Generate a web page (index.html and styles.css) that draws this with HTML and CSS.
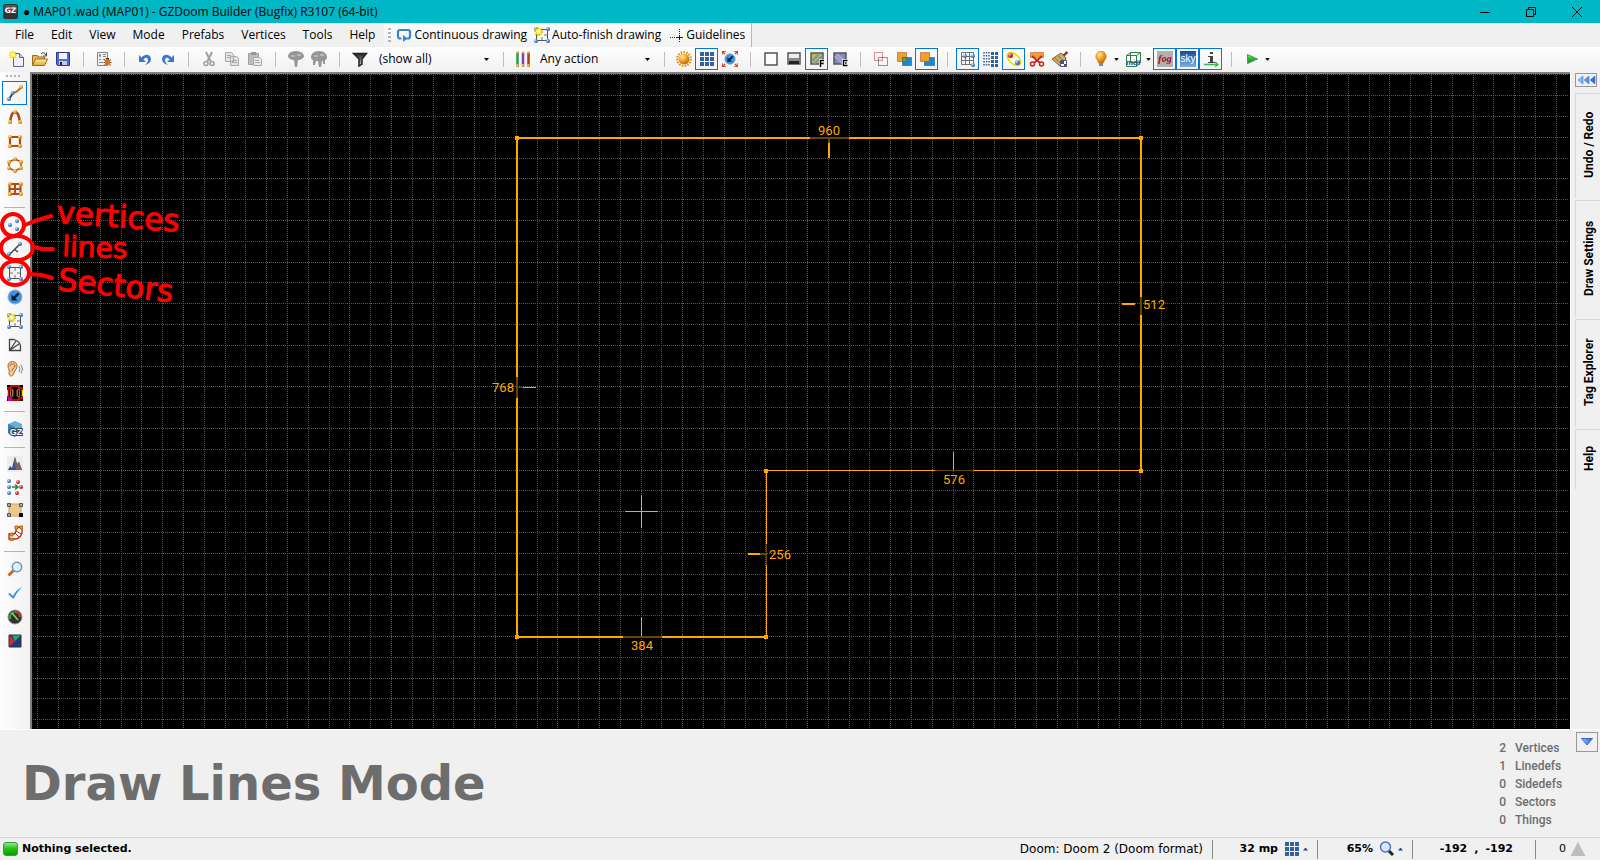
FILE: index.html
```html
<!DOCTYPE html>
<html lang="en">
<head>
<meta charset="utf-8">
<title>MAP01.wad (MAP01) - GZDoom Builder (Bugfix) R3107 (64-bit)</title>
<link rel="stylesheet" href="styles.css">
</head>
<body>
<svg class="defs" width="0" height="0" aria-hidden="true">
  <defs>
    <radialGradient id="gb" cx=".35" cy=".3" r=".8"><stop offset="0" stop-color="#d8ecff"/><stop offset=".45" stop-color="#4a90d8"/><stop offset="1" stop-color="#1c4c94"/></radialGradient>
    <radialGradient id="go" cx=".35" cy=".3" r=".8"><stop offset="0" stop-color="#ffe9a0"/><stop offset=".5" stop-color="#f0a020"/><stop offset="1" stop-color="#a86008"/></radialGradient>
    <radialGradient id="gr" cx=".35" cy=".3" r=".8"><stop offset="0" stop-color="#ffc0c0"/><stop offset=".5" stop-color="#dc3038"/><stop offset="1" stop-color="#901018"/></radialGradient>
    <linearGradient id="gfold" x2="0" y2="1"><stop offset="0" stop-color="#fff0a8"/><stop offset="1" stop-color="#e6a52c"/></linearGradient>
    <linearGradient id="ggreen" x2="0" y2="1"><stop offset="0" stop-color="#8fe08a"/><stop offset=".4" stop-color="#38b838"/><stop offset="1" stop-color="#0c8018"/></linearGradient>
    <linearGradient id="gsky" x2="0" y2="1"><stop offset="0" stop-color="#174a94"/><stop offset="1" stop-color="#7ab0e4"/></linearGradient>
    <linearGradient id="ggrey" x2="0" y2="1"><stop offset="0" stop-color="#222"/><stop offset="1" stop-color="#ccc"/></linearGradient>
    <linearGradient id="garrow" x2="1" y2="0"><stop offset="0" stop-color="#a4c4f4"/><stop offset="1" stop-color="#2860d0"/></linearGradient>
    <symbol id="b" viewBox="0 0 4 4"><circle cx="2" cy="2" r="2" fill="url(#gb)"/></symbol>
    <symbol id="o" viewBox="0 0 4 4"><circle cx="2" cy="2" r="2" fill="url(#go)"/></symbol>
    <symbol id="r" viewBox="0 0 4 4"><circle cx="2" cy="2" r="2" fill="url(#gr)"/></symbol>
    <symbol id="star" viewBox="0 0 8 8"><path d="M4 0v8M0 4h8M1 1l6 6M7 1L1 7" stroke="#f2d800" stroke-width="1.3"/><circle cx="4" cy="4" r="2" fill="#fffb80"/></symbol>
    <symbol id="sector" viewBox="0 0 16 16"><path d="M2.500 2.500h11v11h-11z" fill="#f4f4f4" stroke="#555"/><path d="M8 3v3M8 10v3M3 8h3M10 8h3" stroke="#777"/><use href="#b" x="0" y="0" width="4" height="4"/><use href="#b" x="12" y="0" width="4" height="4"/><use href="#b" x="0" y="12" width="4" height="4"/><use href="#b" x="12" y="12" width="4" height="4"/></symbol>
    <symbol id="makesector" viewBox="0 0 16 16"><use href="#sector" width="16" height="16"/><use href="#star" width="9" height="9"/></symbol>
    <symbol id="grid9" viewBox="0 0 16 16"><path d="M1 1h4v4H1zM6 1h4v4H6zM11 1h4v4h-4zM1 6h4v4H1zM6 6h4v4H6zM11 6h4v4h-4zM1 11h4v4H1zM6 11h4v4H6zM11 11h4v4h-4z" fill="#34609c"/></symbol>
    <symbol id="disc" viewBox="0 0 16 16"><circle cx="8" cy="8" r="7" fill="#3e92dc" stroke="#86b4dc"/><path d="M4.500 11.500v-6L6.500 7.500 11 3.500l1.500 1.500-4 4.500 2 2z" fill="#0c1c30"/></symbol>
    <symbol id="lens" viewBox="0 0 16 16"><path d="M7 9l-5.500 5.500" stroke="#c07020" stroke-width="3"/><circle cx="10" cy="6" r="4.700" fill="#d8efff" stroke="#7090b8" stroke-width="1.500"/><path d="M7.500 5a3 3 0 0 1 3-2" stroke="#fff" stroke-width="1.500" fill="none"/></symbol>
  </defs>
</svg>

<header class="titlebar">
  <svg class="logo" viewBox="0 0 16 16"><rect width="16" height="16" rx="3" fill="#333"/><rect x="1" y="1" width="14" height="7" rx="2" fill="#555"/><text x="8" y="10" text-anchor="middle" class="logo-text">GZ</text></svg>
  <h1 class="title">● MAP01.wad (MAP01) - GZDoom Builder (Bugfix) R3107 (64-bit)</h1>
  <div class="window-buttons">
    <button aria-label="Minimize"><svg viewBox="0 0 10 10"><path d="M0 5.500h10"/></svg></button>
    <button aria-label="Restore"><svg viewBox="0 0 10 10"><path d="M.5 2.500h7v7h-7zM2.500 2V.5h7v7H8"/></svg></button>
    <button aria-label="Close"><svg viewBox="0 0 10 10"><path d="M0 0l10 10M10 0L0 10"/></svg></button>
  </div>
</header>

<div class="menubar">
  <nav class="menus">
    <button>File</button><button>Edit</button><button>View</button><button>Mode</button><button>Prefabs</button><button>Vertices</button><button>Tools</button><button>Help</button>
  </nav>
  <div class="drawbar">
    <span class="grip"></span>
    <button><svg class="ico" viewBox="0 0 16 16"><path d="M5.500 11.500H4a2 2 0 0 1-2-2V5a2 2 0 0 1 2-2h8a2 2 0 0 1 2 2v4.500a2 2 0 0 1-2 2h-1.500" fill="none" stroke="#3a86c8" stroke-width="2.200"/><path d="M7 8v7l4.500-3.500z" fill="#3a86c8"/></svg>Continuous drawing</button>
    <button><svg class="ico"><use href="#makesector"/></svg>Auto-finish drawing</button>
    <button><svg class="ico" viewBox="0 0 16 16"><path d="M2 10.500h13M11.500 2v13" stroke="#222" stroke-dasharray="1 1"/><path d="M9 10.500h5M11.500 8v5" stroke="#222"/></svg>Guidelines</button>
  </div>
</div>

<div class="toolbar">
  <button aria-label="New map"><svg class="ico" viewBox="0 0 16 16"><path d="M4.500 2.500h6l4 4v9h-10z" fill="#eef3fb" stroke="#56657e"/><path d="M10.500 2.500v4h4" fill="#c8d4e8" stroke="#56657e"/><use href="#star" width="8" height="8"/></svg></button>
  <button aria-label="Open map"><svg class="ico" viewBox="0 0 16 16"><path d="M.5 14.500v-10h5l1 1.500h6v3" fill="#e8b648" stroke="#9a7020"/><path d="M.5 14.500l3-6.500h12l-3 6.500z" fill="url(#gfold)" stroke="#9a7020"/><path d="M9 3q3-3 5 1M14.500 1.500V5H11" fill="none" stroke="#444"/></svg></button>
  <button aria-label="Save map"><svg class="ico" viewBox="0 0 16 16"><path d="M1.500 1.500h13v13h-12l-1-1z" fill="#5468d0" stroke="#2c3890"/><path d="M4 2h8v6H4z" fill="#f4f6ff"/><path d="M4 10h8v4H4z" fill="#c4c8d8"/><path d="M5 11h2v3H5z" fill="#223"/></svg></button>
  <span class="sep"></span>
  <button aria-label="Script editor"><svg class="ico" viewBox="0 0 16 16"><path d="M1.500 1.500h10v13h-10z" fill="#f0f0f0" stroke="#888"/><path d="M3.500 3.500h1v2h-1zM7 3.500h3M7 5.500h3M3 8.500h2M7 8.500h2M3 11.500h4" fill="none" stroke="#888"/><ellipse cx="11.500" cy="11" rx="2.500" ry="3.500" fill="#d87020"/><path d="M8 8.500l1.500 1.200M7.500 11.500H9M8 14.500l1.500-1.200M15 8.500l-1.500 1.200M15.500 11.500H14M15 14.500l-1.500-1.200" stroke="#8a4410"/><path d="M10 7.500h3" stroke="#402010"/></svg></button>
  <span class="sep"></span>
  <button aria-label="Undo"><svg class="ico" viewBox="0 0 16 16"><path d="M2 4v7h7L6.500 8.500C8 6 11 6 11 9c0 2-1 3-3 5 4-1 6-3 6-6 0-5-6-6-9.500-1.500z" fill="#3a78d0"/></svg></button>
  <button aria-label="Redo"><svg class="ico flip" viewBox="0 0 16 16"><path d="M2 4v7h7L6.500 8.500C8 6 11 6 11 9c0 2-1 3-3 5 4-1 6-3 6-6 0-5-6-6-9.500-1.500z" fill="#3a78d0"/></svg></button>
  <span class="sep"></span>
  <button aria-label="Cut" disabled><svg class="ico" viewBox="0 0 16 16"><path d="M5 1l4.500 9M11 1l-4.500 9" stroke="#a0a0a0" stroke-width="2"/><circle cx="5" cy="12.500" r="2" fill="none" stroke="#a0a0a0" stroke-width="1.500"/><circle cx="11" cy="12.500" r="2" fill="none" stroke="#a0a0a0" stroke-width="1.500"/></svg></button>
  <button aria-label="Copy" disabled><svg class="ico" viewBox="0 0 16 16"><path d="M1.500 1.500h6l2 2v7h-8zM6.500 5.500h6l2 2v7h-8z" fill="#e4e4e4" stroke="#a8a8a8"/><path d="M3 4.500h4M3 6.500h3M8 9.500h5M8 11.500h5" stroke="#a8a8a8"/></svg></button>
  <button aria-label="Paste" disabled><svg class="ico" viewBox="0 0 16 16"><path d="M1.500 2.500h10v11h-10z" fill="#bcbcbc" stroke="#a0a0a0"/><path d="M4 1h5v3H4z" fill="#989898"/><path d="M6.500 6.500h6l2 2v6h-8z" fill="#e8e8e8" stroke="#a8a8a8"/><path d="M8 9.500h4M8 11.500h5" stroke="#a8a8a8"/></svg></button>
  <span class="sep"></span>
  <button aria-label="Insert prefab" disabled><svg class="ico" viewBox="0 0 16 16"><path d="M8 0c5 0 8 3 8 5s-3 4-6 4l-1 7H7L6 9C3 9 0 7 0 5s3-5 8-5z" fill="#969696"/><path d="M3 5h4M9 4h4" stroke="#b8b8b8" stroke-width="2"/></svg></button>
  <button aria-label="Insert previous prefab" disabled><svg class="ico" viewBox="0 0 16 16"><path d="M8 0c5 0 8 3 8 6s-2 3-2 3v4h-2v-3h-1l-1 6H8l-1-6H5l-1 4H2V9S0 9 0 6s3-6 8-6z" fill="#969696"/><path d="M3 5h4M9 4h4" stroke="#b8b8b8" stroke-width="2"/></svg></button>
  <span class="sep"></span>
  <button aria-label="Things filter"><svg class="ico" viewBox="0 0 16 16"><path d="M1.500 2.500h13L10 8v5l-3 2V8z" fill="url(#ggrey)" stroke="#222" stroke-width="1.500"/></svg></button>
  <select class="picker filter" aria-label="Things filter"><option>(show all)</option></select>
  <span class="sep narrow"></span>
  <button aria-label="Linedef colors"><svg class="ico" viewBox="0 0 16 16"><path d="M2.500 2v12" stroke="#20a048" stroke-width="2.500"/><path d="M8 2v12" stroke="#9038b8" stroke-width="2.500"/><path d="M13.500 2v12" stroke="#a84010" stroke-width="2.500"/><use href="#o" x="1" width="3" height="3"/><use href="#o" x="6.500" width="3" height="3"/><use href="#o" x="12" width="3" height="3"/><use href="#o" x="1" y="13" width="3" height="3"/><use href="#o" x="6.500" y="13" width="3" height="3"/><use href="#o" x="12" y="13" width="3" height="3"/></svg></button>
  <select class="picker" aria-label="Linedef action"><option>Any action</option></select>
  <span class="sep narrow"></span>
  <button aria-label="Full brightness"><svg class="ico" viewBox="0 0 16 16"><circle cx="8" cy="8" r="6.700" fill="none" stroke="#e09010" stroke-width="2.500" stroke-dasharray="1.500 1.300"/><circle cx="8" cy="8" r="5.300" fill="url(#go)"/></svg></button>
  <button class="on" aria-label="Grid"><svg class="ico"><use href="#grid9"/></svg></button>
  <button aria-label="Dynamic grid"><svg class="ico" viewBox="0 0 16 16"><use href="#disc" x="2" y="2" width="12" height="12"/><path d="M0 4V0h4M12 0h4v4M16 12v4h-4M4 16H0v-4M0 0l3 3M16 0l-3 3M16 16l-3-3M0 16l3-3" fill="none" stroke="#d43820" stroke-width="1.300"/></svg></button>
  <span class="sep"></span>
  <button aria-label="View wireframe"><svg class="ico" viewBox="0 0 16 16"><path d="M2 2h12v12H2z" fill="#fbfbfb" stroke="#555" stroke-width="1.500"/></svg></button>
  <button aria-label="View brightness"><svg class="ico" viewBox="0 0 16 16"><path d="M2 2h12v11H2z" fill="#eee" stroke="#555" stroke-width="1.500"/><path d="M3 7h10v3H3z" fill="#888"/><path d="M3 10h10v3H3z" fill="#222"/></svg></button>
  <button class="on" aria-label="View floor textures"><svg class="ico" viewBox="0 0 16 16"><path d="M2 2h12v11H2z" fill="#b8b870" stroke="#555" stroke-width="1.500"/><path d="M3 10l7-7M5 13l8-8" stroke="#7c9890" stroke-width="2"/><path d="M11.500 16V9.500H15M11 12.500h3.500" fill="none" stroke="#fff" stroke-width="3"/><path d="M11.500 16V9.500H15M11 12.500h3.500" fill="none" stroke="#000" stroke-width="1.500"/></svg></button>
  <button aria-label="View ceiling textures"><svg class="ico" viewBox="0 0 16 16"><path d="M2 2h12v11H2z" fill="#7890c0" stroke="#555" stroke-width="1.500"/><path d="M3 5l8 8M5 3l8 8" stroke="#b4a4d8" stroke-width="2"/><path d="M15.500 9.500h-4v5h4" fill="none" stroke="#fff" stroke-width="3"/><path d="M15.500 9.500h-4v5h4" fill="none" stroke="#000" stroke-width="1.500"/></svg></button>
  <span class="sep"></span>
  <button aria-label="Merge vertices only"><svg class="ico" viewBox="0 0 16 16"><path d="M1.500 1.500h8v8h-8z" fill="none" stroke="#c02030" stroke-dasharray="1 1"/><path d="M5.500 6.500h9v8h-9z" fill="none" stroke="#333" stroke-dasharray="1 1"/></svg></button>
  <button aria-label="Merge geometry"><svg class="ico" viewBox="0 0 16 16"><path d="M1.500 1.500h9v9h-9z" fill="#f0a028" stroke="#b03818" stroke-dasharray="1 1"/><path d="M6.500 6.500h9v8h-9z" fill="#1888d0" stroke="#104878" stroke-dasharray="1 1"/><path d="M6.500 6.500h4v4h-4z" fill="#38b838" stroke="#b03818" stroke-dasharray="1 1"/></svg></button>
  <button class="on" aria-label="Replace geometry"><svg class="ico" viewBox="0 0 16 16"><path d="M5.500 6.500h10v8h-10z" fill="#1888d0" stroke="#104878" stroke-dasharray="1 1"/><path d="M1.500 1.500h9v9h-9z" fill="#f0a028" stroke="#b03818" stroke-dasharray="1 1"/></svg></button>
  <span class="sep"></span>
  <button class="on" aria-label="Snap to grid"><svg class="ico" viewBox="0 0 16 16"><path d="M1.500 1.500h12v12h-12zM5.500 1v13M9.500 1v13M1 5.500h13M1 9.500h13" fill="none" stroke="#707070"/><use href="#b" x="3" y="3" width="4" height="4"/><use href="#b" x="11" y="3" width="4" height="4"/><use href="#b" x="11" y="12" width="4" height="4"/></svg></button>
  <button aria-label="Snap to geometry"><svg class="ico" viewBox="0 0 16 16"><path d="M1 1v15M3.500 1v15M6 1v15" stroke="#34609c" stroke-width="1.500" stroke-dasharray="1.500 1.500"/><path d="M8 1h3v3H8zM12 1h3v3h-3zM8 5h3v3H8zM12 5h3v3h-3zM8 9h3v3H8zM12 9h3v3h-3zM8 13h3v3H8zM12 13h3v3h-3z" fill="#34609c"/></svg></button>
  <button class="on" aria-label="Join sectors"><svg class="ico" viewBox="0 0 16 16"><ellipse cx="8" cy="8" rx="8" ry="4.700" transform="rotate(42 8 8)" fill="#fffde0" stroke="#f0d000" stroke-width="1.500"/><use href="#r" x="2" y="2" width="5" height="5"/><use href="#b" x="9" y="9" width="5" height="5"/></svg></button>
  <button aria-label="Split joined sectors"><svg class="ico" viewBox="0 0 16 16"><path d="M1.500 1.500h13v5h-13z" fill="#f0a028" stroke="#c05010" stroke-dasharray="1 1"/><path d="M3 5l8 7M13 5l-8 7" stroke="#c82020" stroke-width="1.800"/><circle cx="3.500" cy="13" r="2" fill="none" stroke="#c82020" stroke-width="1.500"/><circle cx="12.500" cy="13" r="2" fill="none" stroke="#c82020" stroke-width="1.500"/></svg></button>
  <button aria-label="Clear textures"><svg class="ico" viewBox="0 0 16 16"><path d="M15.500 1L11 5" stroke="#805020" stroke-width="2.500"/><path d="M9 2l5 5-2 7-4 1L0 8z" fill="#d0ac6c" stroke="#806028"/><path d="M3 7l6 6M6 5l6 5" stroke="#907038"/><path d="M8.500 9.500h6v6h-6z" fill="#fff" stroke="#557"/><path d="M9 10h3v3H9zM12 13h2v2h-2z" fill="#345878"/></svg></button>
  <span class="sep"></span>
  <button aria-label="Dynamic lights"><svg class="ico" viewBox="0 0 16 16"><path d="M8 0a5.500 5.500 0 0 1 3.500 9.500L10.500 12h-5L4.500 9.500A5.500 5.500 0 0 1 8 0z" fill="url(#go)" stroke="#d88818" stroke-width=".6"/><path d="M6 12h4v3H6z" fill="#888"/></svg></button><i class="drop"></i>
  <button aria-label="Models"><svg class="ico" viewBox="0 0 16 16"><path d="M1.500 4.500h10v11h-10zM1.500 4.500l4-3h10v10l-4 4M11.500 4.500l4-3M5.500 1.500v10h10" fill="none" stroke="#2e8048"/><text x="1" y="14" class="mdl">mdl</text></svg></button><i class="drop"></i>
  <button class="on" aria-label="Fog"><svg class="ico" viewBox="0 0 16 16"><rect width="16" height="16" fill="#b4b0b0"/><text x="8" y="11" text-anchor="middle" class="fog">fog</text></svg></button>
  <button class="on" aria-label="Sky"><svg class="ico" viewBox="0 0 16 16"><rect width="16" height="16" fill="url(#gsky)"/><text x="8" y="11" text-anchor="middle" class="sky">sky</text></svg></button>
  <button class="on" aria-label="Event lines"><svg class="ico" viewBox="0 0 16 16"><path d="M7 1h3v2H7zM5 5h5v6h2v1H5v-1h2V6H5z" fill="#444"/><path d="M1 13.500h14M12 11l3 2.500-3 2.500" fill="none" stroke="#38b858" stroke-width="1.300"/></svg></button>
  <span class="sep"></span>
  <button aria-label="Test map"><svg class="ico" viewBox="0 0 16 16"><path d="M3.500 3.500l10 4.500-10 4.500z" fill="url(#ggreen)" stroke="#4c9858"/></svg></button><i class="drop"></i>
</div>

<main class="workspace">
  <aside class="rail">
    <span class="rail-grip"></span>
    <div class="group">
      <button class="on" aria-label="Draw lines"><svg class="ico" viewBox="0 0 16 16"><path d="M2 14l4-6" stroke="#204060" stroke-width="2"/><path d="M6 8q5-1 8-6" fill="none" stroke="#a87018" stroke-width="2"/><use href="#b" y="12" width="4" height="4"/><use href="#b" x="3.500" y="6" width="4" height="4"/><use href="#o" x="12" width="4" height="4"/></svg></button>
      <button aria-label="Draw curve"><svg class="ico" viewBox="0 0 16 16"><path d="M3 13C4 7 5 3 8 3s4 4 5 10" fill="none" stroke="#a84820" stroke-width="2.500"/><use href="#o" x="6" y="1" width="4" height="4"/><use href="#o" x="1" y="11" width="4" height="4"/><use href="#o" x="11" y="11" width="4" height="4"/></svg></button>
      <button aria-label="Draw rectangle"><svg class="ico" viewBox="0 0 16 16"><path d="M3 4h10v9H3z" fill="none" stroke="#b04c18" stroke-width="2.200"/><use href="#o" x="1" y="2" width="4" height="4"/><use href="#o" x="11" y="2" width="4" height="4"/><use href="#o" x="1" y="11" width="4" height="4"/><use href="#o" x="11" y="11" width="4" height="4"/></svg></button>
      <button aria-label="Draw ellipse"><svg class="ico" viewBox="0 0 16 16"><path d="M8 2l6 3v6l-6 3-6-3V5z" fill="none" stroke="#b04c18" stroke-width="1.500"/><use href="#o" x="6" width="4" height="4"/><use href="#o" x="12" y="3" width="4" height="4"/><use href="#o" x="12" y="9" width="4" height="4"/><use href="#o" x="6" y="12" width="4" height="4"/><use href="#o" y="9" width="4" height="4"/><use href="#o" y="3" width="4" height="4"/></svg></button>
      <button aria-label="Draw grid"><svg class="ico" viewBox="0 0 16 16"><path d="M2.500 3h11v10h-11zM8 3v10M2 8h12" fill="none" stroke="#b04c18" stroke-width="2"/><use href="#o" x="1" y="1" width="4" height="4"/><use href="#o" x="12" y="1" width="4" height="4"/><use href="#o" x="1" y="11" width="4" height="4"/><use href="#o" x="12" y="11" width="4" height="4"/></svg></button>
    </div>
    <div class="group">
      <button aria-label="Vertices mode"><svg class="ico" viewBox="0 0 16 16"><use href="#b" x="1" y="6" width="4" height="4"/><use href="#b" x="8" y="2" width="4" height="4"/><use href="#b" x="8" y="10" width="4" height="4"/></svg></button>
      <button aria-label="Linedefs mode"><svg class="ico" viewBox="0 0 16 16"><path d="M2 14L13 3M7 8l4 3" stroke="#444" stroke-width="1.500"/><use href="#b" y="11" width="4" height="4"/><use href="#b" x="11" y="1" width="4" height="4"/></svg></button>
      <button aria-label="Sectors mode"><svg class="ico"><use href="#sector"/></svg></button>
      <button aria-label="Things mode"><svg class="ico"><use href="#disc"/></svg></button>
      <button aria-label="Make sectors mode"><svg class="ico"><use href="#makesector"/></svg></button>
      <button aria-label="Brightness mode"><svg class="ico" viewBox="0 0 16 16"><path d="M2.500 2.500H7q6 2 6.500 6.500v4.500h-11zM3 13l6-9M3 13l9-6" fill="#f4f4f4" stroke="#444" stroke-width="1.300"/></svg></button>
      <button aria-label="Sound propagation mode"><svg class="ico" viewBox="0 0 16 16"><path d="M1 5c0-6 9-6 9 0 0 3-2 4-3 7-1 4-5 4-5 0 1-3-1-3-1-7z" fill="#f4c490" stroke="#a06c38"/><path d="M3 5c0-3 5-3 5 0 0 2-3 2-3 5" fill="none" stroke="#a06c38"/><path d="M12 5q2 3 0 6M14 3.500q3 4.500 0 9" fill="none" stroke="#888"/></svg></button>
      <button aria-label="Sound environment mode"><svg class="ico" viewBox="0 0 16 16"><rect width="16" height="16" fill="#100000"/><path d="M1 3h3V1h8v2h3v10h-3v2H4v-2H1z" fill="none" stroke="#e81010" stroke-width="1.500"/><path d="M3.500 4.500h2v7h-2zM10.500 4.500h2v7h-2zM6 5v6M10 5v6" fill="none" stroke="#a07050"/><path d="M.5 5v6M15.500 5v6" stroke="#f0e000"/><path d="M1 13h3v3H1z" fill="#d000d0"/></svg></button>
    </div>
    <div class="group">
      <button aria-label="Visual mode"><svg class="ico" viewBox="0 0 16 16"><path d="M8 0l7 3v9l-7 4-7-4V3z" fill="#68aede"/><path d="M8 6v10l-7-4V3z" fill="#3c80b8"/><text x="9" y="14" text-anchor="middle" class="gz">GZ</text></svg></button>
    </div>
    <div class="group tight">
      <button aria-label="Terrain"><svg class="ico" viewBox="0 0 16 16"><rect width="16" height="16" fill="#ececec"/><path d="M1 14l2-4 2 2 2-8 1-3 2 7 2-2 3 8z" fill="#405088"/><path d="M7 4l1-3 2 7 2-2 3 8H9z" fill="#806070"/></svg></button>
      <button aria-label="Thing type change"><svg class="ico" viewBox="0 0 16 16"><use href="#b" width="4" height="4"/><use href="#b" y="6" width="4" height="4"/><use href="#b" y="12" width="4" height="4"/><use href="#r" x="9" y="1" width="4" height="4"/><use href="#r" x="12" y="6" width="4" height="4"/><use href="#r" x="8" y="12" width="4" height="4"/><path d="M5 8h5M8 5.500L11 8l-3 2.500" fill="none" stroke="#208838" stroke-width="1.500"/></svg></button>
      <button aria-label="Fit sector"><svg class="ico" viewBox="0 0 16 16"><path d="M2 2h12v12H2z" fill="#ecc88c" stroke="#c8a068"/><path d="M.5 1.500h3v3h-3zM12.500 1.500h3v3h-3zM.5 11.500h3v3h-3z" fill="#aaa" stroke="#555"/><path d="M12 11h4v4h-4z"/></svg></button>
      <button aria-label="Stairs"><svg class="ico" viewBox="0 0 16 16"><path d="M2 9h5l2-3V2h6v6q-2 6-7 6H2z" fill="#fff" stroke="#b02818" stroke-width="1.300"/><path d="M8 8l4 4M9 6l5 3" stroke="#b02818"/><path d="M8 1h3v3H8zM13 1h3v3h-3zM3 8h3v3H3zM3 13h3v3H3z" fill="#f0a020" stroke="#a04810" stroke-width=".7"/></svg></button>
    </div>
    <div class="group">
      <button aria-label="Find and replace"><svg class="ico"><use href="#lens"/></svg></button>
      <button aria-label="Map analysis"><svg class="ico" viewBox="0 0 16 16"><path d="M1 9l2-1 3 3Q9 5 15 2 10 7 6.500 14z" fill="#3c90dc"/></svg></button>
      <button aria-label="Performance"><svg class="ico" viewBox="0 0 16 16"><circle cx="8" cy="8" r="7" fill="#303030" stroke="#999"/><path d="M3.500 10a5 5 0 0 1 4-7" fill="none" stroke="#30a838" stroke-width="2"/><path d="M8 3a5 5 0 0 1 5 5" fill="none" stroke="#d04030" stroke-width="2"/><path d="M5 4l6 7" stroke="#90d860" stroke-width="1.500"/></svg></button>
      <button aria-label="Color picker"><svg class="ico" viewBox="0 0 16 16"><path d="M2 2h12v12H2z" fill="#203888"/><path d="M2 2l6 6-6 6z" fill="#d82830"/><path d="M5 2h9L8 8z" fill="#20b060"/><path d="M2 2h12v12H2z" fill="none" stroke="#333"/></svg></button>
    </div>
  </aside>

  <section class="map" aria-label="Map view">
    <svg class="map-svg">
      <g id="grid" class="grid"></g>
      <g class="dim">
        <path class="thick" d="M778 64h39M485 303v21M1109 223v18M591 563h39M797 65v4M728 480h6"/>
        <path d="M903 396.500h39M734.500 470v21M486 313.500h5"/>
      </g>
      <g class="line">
        <path class="thick" d="M485 64h293M817 64h292M485 64v239M485 324v239M1109 64v159M1109 241v156M485 563h106M630 563h104M797 69v15M716 480h12M1090 230h13"/>
        <path d="M734 396.500h169M942 396.500h167M734.500 397v73M734.500 491v72M491 313.500h13M921.500 378v18M609.500 543v19M609.500 421v33M593 437.500h33"/>
        <path class="vertex" d="M483 62h4v4h-4zM1107 62h4v4h-4zM1107 395h4v4h-4zM732 395h4v4h-4zM732 561h4v4h-4zM483 561h4v4h-4z"/>
      </g>
      <g class="lengths">
        <text x="797" y="61">960</text><text x="1122" y="235">512</text><text x="471" y="318">768</text><text x="922" y="410">576</text><text x="748" y="485">256</text><text x="610" y="576">384</text>
      </g>
    </svg>
  </section>

  <aside class="dock">
    <button class="collapse" aria-label="Collapse panel"><svg viewBox="0 0 20 10"><path d="M7 1v8L2 5zM13 1v8L8 5zM19 1v8l-5-4z" fill="url(#garrow)" stroke="#4878d0" stroke-width=".6"/></svg></button>
    <button class="tab t1">Undo / Redo</button>
    <button class="tab t2">Draw Settings</button>
    <button class="tab t3">Tag Explorer</button>
    <button class="tab t4">Help</button>
  </aside>

  <svg class="notes" viewBox="0 0 200 250">
    <g class="notes-ink">
      <ellipse cx="13" cy="153" rx="11" ry="11"/><ellipse cx="17" cy="176" rx="16" ry="12"/><ellipse cx="15" cy="201" rx="14" ry="12"/>
      <path d="M25 153l10-4 16-5M34 175l8 2h11M29 202l13 1 10 3"/>
    </g>
    <g class="notes-text">
      <text transform="translate(56 151) rotate(4)" class="big">vertices</text>
      <text transform="translate(62 184) rotate(2)" class="small">lines</text>
      <text transform="translate(57 218) rotate(6)" class="big">Sectors</text>
    </g>
  </svg>
</main>

<section class="info">
  <h2 class="mode">Draw Lines Mode</h2>
  <table class="counts">
    <tr><td>2</td><th scope="row">Vertices</th></tr>
    <tr><td>1</td><th scope="row">Linedefs</th></tr>
    <tr><td>0</td><th scope="row">Sidedefs</th></tr>
    <tr><td>0</td><th scope="row">Sectors</th></tr>
    <tr><td>0</td><th scope="row">Things</th></tr>
  </table>
  <button class="toggle" aria-label="Collapse info panel"><svg viewBox="0 0 12 8"><path d="M.5.5h11L6 7z" fill="url(#garrow)" stroke="#3468c8"/></svg></button>
</section>

<footer class="status">
  <span class="lamp"></span>
  <span class="message">Nothing selected.</span>
  <span class="config">Doom: Doom 2 (Doom format)</span>
  <button class="cell c-grid">32 mp<svg class="ico"><use href="#grid9"/></svg><i class="up"></i></button>
  <button class="cell c-zoom">65%<svg class="ico" viewBox="0 0 16 16"><path d="M9 9l5 5" stroke="#222" stroke-width="3"/><circle cx="6.500" cy="6" r="5" fill="#d8e8ff" stroke="#5070d0" stroke-width="1.500"/></svg><i class="up"></i></button>
  <span class="cell c-pos"><span>-192</span><span>,</span><span>-192</span></span>
  <span class="cell c-warn">0<svg class="ico" viewBox="0 0 16 16"><path d="M8 1l7.500 14H.5z" fill="#bdbdbd"/></svg></span>
</footer>
<script src="grid.js"></script>
</body>
</html>
```

FILE: grid.js
```js
// Dotted map grid: 32 map units per cell at 65% zoom, every second line is a 64-unit line.
const STEP = 20.8;
const ORIGIN = { x: 484.3, y: 63.3 };
const grid = document.getElementById("grid");
const view = document.querySelector(".map-svg");

function addLine(d, major) {
  const path = document.createElementNS("http://www.w3.org/2000/svg", "path");
  path.setAttribute("d", d);
  path.setAttribute("class", major ? "major" : "minor");
  grid.append(path);
}

function drawGrid() {
  grid.replaceChildren();
  const width = view.clientWidth;
  const height = view.clientHeight;
  for (const pass of [1, 0]) {
    for (let k = -23; ORIGIN.x + k * STEP < width; k++) {
      if (Math.abs(k % 2) !== pass) continue;
      addLine(`M${Math.floor(ORIGIN.x + k * STEP) + 0.5} 1V${height}`, pass === 0);
    }
    for (let k = -3; ORIGIN.y + k * STEP < height; k++) {
      if (Math.abs(k % 2) !== pass) continue;
      addLine(`M1 ${Math.floor(ORIGIN.y + k * STEP) + 0.5}H${width - 2}`, pass === 0);
    }
  }
}

drawGrid();
window.addEventListener("resize", drawGrid);
```

FILE: styles.css
```css
* { box-sizing: border-box; }
body {
  margin: 0;
  min-height: 100vh;
  display: flex;
  flex-direction: column;
  background: #f0f0f0;
  color: #000;
  font: 12px/16px "Open Sans", "Noto Sans", sans-serif;
}
button {
  margin: 0;
  padding: 0;
  border: 0;
  background: none;
  color: inherit;
  font: inherit;
}
.defs { position: absolute; }
.ico { width: 16px; height: 16px; flex: none; display: block; }
.flip { transform: scaleX(-1); }

.titlebar { height: 23px; display: flex; align-items: center; padding-left: 3px; background: #00b7c6; }
.logo { width: 15px; height: 15px; margin-right: 5px; }
.logo-text { font: bold 8px "DejaVu Sans", sans-serif; fill: #fff; }
.title { flex: 1; margin: 0; font-size: 12px; font-weight: 400; }
.window-buttons { display: flex; }
.window-buttons button { width: 46px; height: 23px; display: grid; place-items: center; }
.window-buttons svg { width: 10px; height: 10px; fill: none; stroke: #000; overflow: visible; }

.menubar { height: 24px; display: flex; }
.menus { display: flex; padding-left: 6px; }
.menus button { padding: 0 9px; }
.menus button + button { padding-left: 8px; }
.drawbar {
  display: flex;
  align-items: center;
  gap: 7px;
  padding-right: 6px;
  border-right: 1px solid #b8b8b8;
  background: linear-gradient(#fbfbfb, #f2f2f2);
}
.drawbar button { display: flex; align-items: center; gap: 2px; }
.grip { width: 3px; height: 14px; margin-left: 4px; margin-right: -2px; background: repeating-linear-gradient(#b4b4b4 0 2px, transparent 2px 4px); }

.toolbar {
  height: 25px;
  display: flex;
  align-items: center;
  padding: 0 0 1px 5px;
  background: linear-gradient(#fdfdfd, #f1f1f1);
}
.toolbar button { flex: none; width: 23px; height: 22px; display: grid; place-items: center; }
.on { border: 1px solid #0078d7; }
.sep { flex: none; width: 18px; height: 15px; background: linear-gradient(#bdbdbd, #bdbdbd) center / 1px 100% no-repeat; }
.sep.narrow { width: 16px; }
.picker {
  flex: none;
  width: 122px;
  height: 20px;
  padding: 0 6px;
  border: 0;
  appearance: none;
  color: #000;
  font: inherit;
  background: url("data:image/svg+xml,%3Csvg xmlns='http://www.w3.org/2000/svg' width='5' height='3'%3E%3Cpath d='M0 0h5L2.500 3z'/%3E%3C/svg%3E") right 6px center no-repeat;
}
.filter { margin-left: 2px; }
.drop { flex: none; width: 9px; height: 3px; background: #000; clip-path: polygon(2px 0, 7px 0, 5px 3px, 4px 3px); }
.mdl { font: bold 8px "Liberation Sans", sans-serif; fill: #305090; }
.fog { font: italic bold 10px "Liberation Serif", serif; fill: #b00010; }
.sky { font: 10px "Liberation Sans", sans-serif; fill: #fff; }
.gz { font: bold 9px "Liberation Sans", sans-serif; fill: #fff; stroke: #345; stroke-width: 2px; paint-order: stroke; }

.workspace { position: relative; flex: 1; display: flex; }
.rail { width: 30px; padding-left: 2px; background: linear-gradient(90deg, #fdfdfd, #f1f1f1); }
.rail-grip { display: block; width: 14px; height: 2px; margin: 3px 0 4px 4px; background: repeating-linear-gradient(90deg, #b4b4b4 0 2px, transparent 2px 4px); }
.rail button { width: 25px; height: 24px; display: grid; place-items: center; }
.rail .tight button { height: 23px; }
.group + .group::before { content: ""; display: block; width: 21px; height: 1px; margin: 6px 2px 5px; background: #b4b4b4; }
.group + .tight::before { margin-bottom: 4px; }
.tight + .group::before { margin-top: 7px; }
.map {
  position: relative;
  flex: 1;
  min-width: 0;
  border: solid #808080;
  border-width: 2px 0 0 2px;
  background: #000;
}
.map-svg { position: absolute; inset: 0; width: 100%; height: 100%; }
.grid { fill: none; stroke-dasharray: 1 1; shape-rendering: crispEdges; }
.minor { stroke: #545454; }
.major { stroke: #41617a; }
.line, .dim { fill: none; shape-rendering: crispEdges; }
.line { stroke: #ffa800; }
.dim { stroke: #664606; }
.thick { stroke-width: 2px; }
.vertex { fill: #ffa800; stroke: none; }
.lengths { font: 13px Roboto, sans-serif; fill: #ffa800; text-anchor: middle; }

.dock { width: 30px; padding: 1px 0 0 4px; border-left: 1px solid #fff; }
.collapse { width: 22px; height: 14px; display: grid; place-items: center; margin-bottom: 6px; border: 1px solid #999; }
.collapse svg { width: 20px; height: 10px; }
.tab {
  display: block;
  width: 25px;
  padding: 2px 1px 0 0;
  border: solid #d8d8d8;
  border-width: 0 1px 1px 0;
  writing-mode: vertical-rl;
  transform: rotate(180deg);
  text-align: center;
  font: bold 12px/20px Roboto, sans-serif;
}
.t1 { height: 105px; }
.t2 { height: 117px; margin-top: 2px; }
.t3 { height: 108px; margin-top: 2px; }
.t4 { height: 60px; margin-top: 2px; }

.notes { position: absolute; left: 0; top: 0; width: 200px; height: 250px; pointer-events: none; }
.notes-ink { fill: none; stroke: #f00; stroke-width: 4px; stroke-linecap: round; }
.notes-text { font-family: "DejaVu Sans", sans-serif; fill: #f00; stroke: #f00; stroke-width: 1px; }
.big { font-size: 31px; }
.small { font-size: 28px; }

.info { display: flex; height: 108px; border-top: 1px solid #fff; }
.mode { flex: 1; margin: 0; padding-left: 22px; color: #6d6d6d; font: bold 48px/106px "DejaVu Sans", sans-serif; }
.counts { margin: 9px 11px 0 0; border-collapse: collapse; color: #6d6d6d; font: 500 12px/18px Roboto, sans-serif; align-self: flex-start; }
.counts th { width: 50px; padding: 0; text-align: left; font-weight: 500; }
.counts td { padding: 0 9px 0 0; }
.toggle { width: 22px; height: 20px; margin: 2px 2px 0 0; display: grid; place-items: center; border: 1px solid #999; }
.toggle svg { width: 12px; height: 8px; }

.status {
  height: 23px;
  display: flex;
  align-items: center;
  padding: 0 14px 0 3px;
  border-top: 1px solid #d7d7d7;
  font: 11px/16px "DejaVu Sans", sans-serif;
}
.lamp { width: 15px; height: 14px; margin-right: 4px; border: 1px solid #30a030; border-radius: 3px; background: linear-gradient(#98e490, #28c41c 45%, #089c08); }
.message { flex: 1; font-weight: 700; }
.config { padding-right: 9px; font-size: 12px; }
.cell { height: 19px; display: flex; align-items: center; justify-content: flex-end; gap: 6px; padding-right: 9px; border-left: 1px solid #888; font-weight: 700; }
.c-grid { width: 105px; }
.c-zoom { width: 95px; }
.c-pos { width: 123px; padding-right: 22px; gap: 7px; }
.c-warn { width: 51px; padding: 0; gap: 4px; font-weight: 400; }
.up { width: 5px; height: 3px; margin-left: -3px; background: #2040a0; clip-path: polygon(0 100%, 50% 0, 100% 100%); }
```
